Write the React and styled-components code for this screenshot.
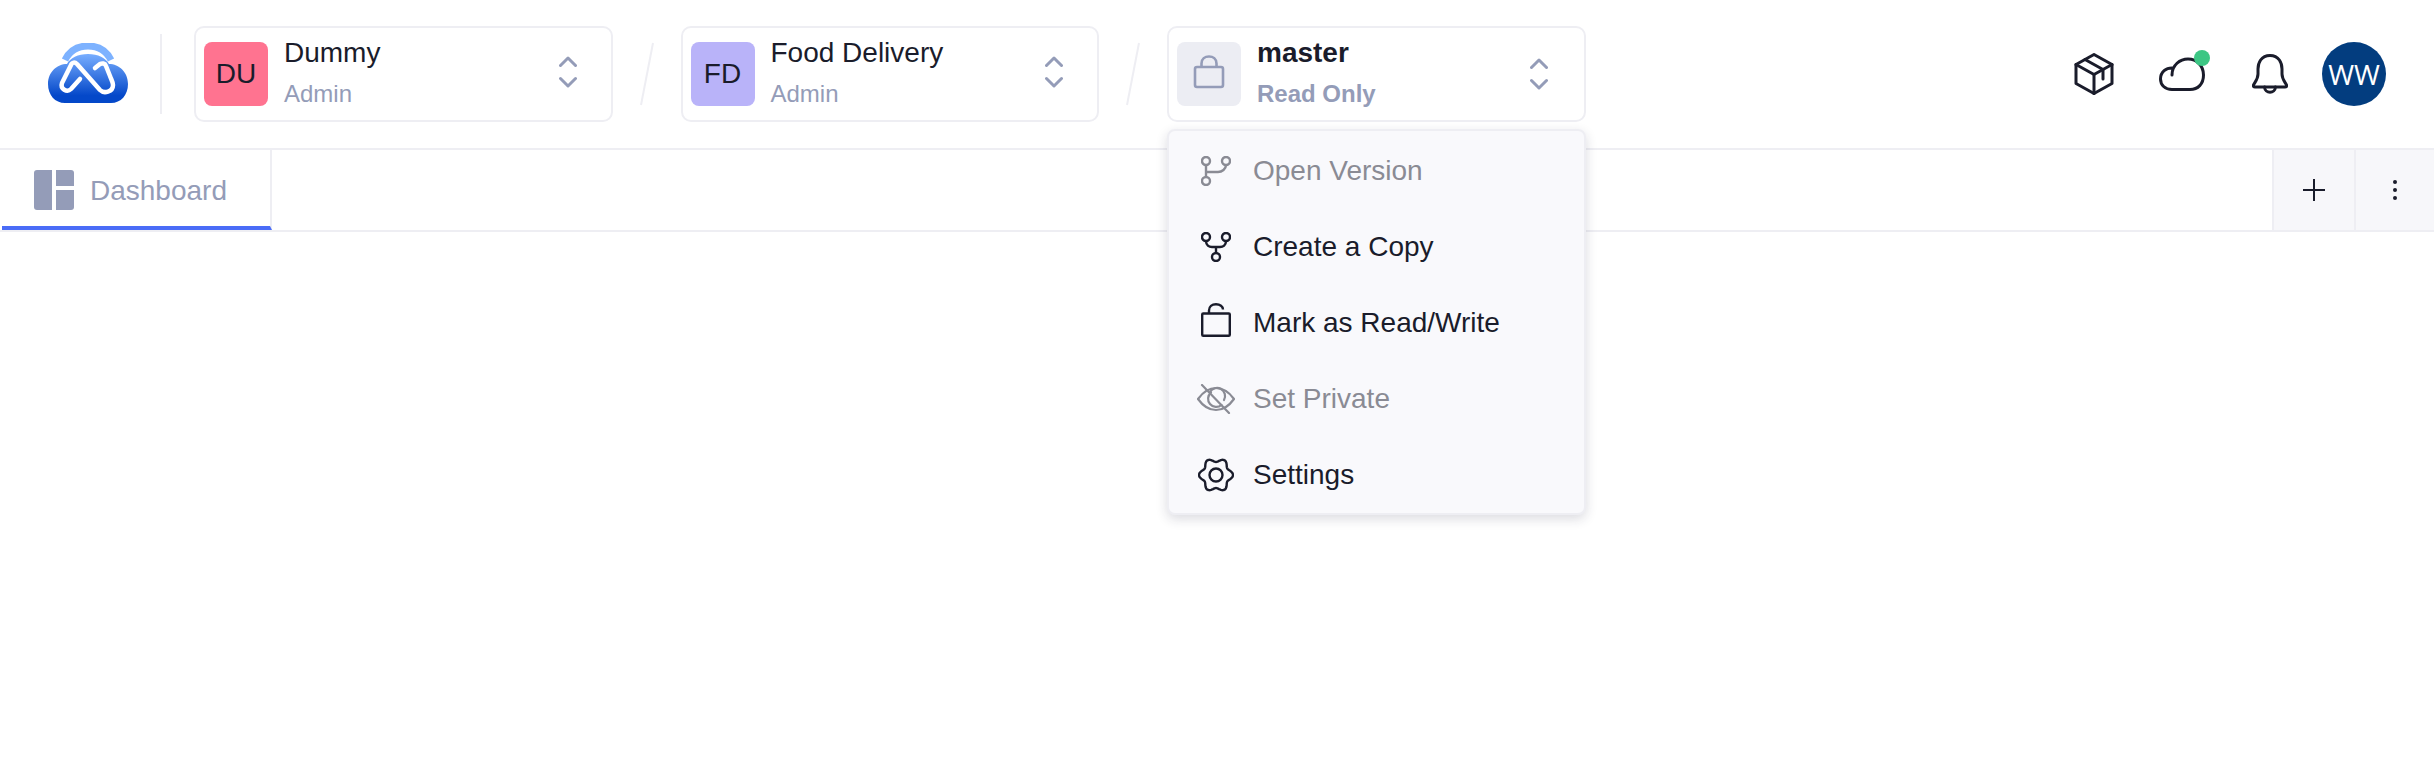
import React from "react";
import styled, { createGlobalStyle } from "styled-components";

const GlobalStyle = createGlobalStyle`
  html, body {
    margin: 0;
    background: #ffffff;
    font-family: "Liberation Sans", Arial, sans-serif;
    color: #1a1c2b;
  }
`;

const Page = styled.div`
  width: 2434px;
  height: 784px;
  overflow: hidden;
`;

const Header = styled.header`
  display: flex;
  align-items: center;
  height: 148px;
  padding: 0 48px;
  border-bottom: 2px solid #eeeef3;
`;

const LogoWrap = styled.div`
  display: flex;
  width: 80px;
  height: 60px;
  margin-bottom: 2px;
`;

const Divider = styled.div`
  width: 2px;
  height: 80px;
  margin: 0 32px;
  background: #eeeef3;
`;

const SwitcherWrap = styled.div`
  position: relative;
`;

const Switcher = styled.div`
  box-sizing: border-box;
  display: flex;
  align-items: center;
  width: 418.5px;
  height: 96px;
  padding: 0 0 0 8px;
  background: #fff;
  border: 2px solid #eeeef3;
  border-radius: 10px;
`;

const Badge = styled.div`
  display: flex;
  align-items: center;
  justify-content: center;
  flex: none;
  width: 64px;
  height: 64px;
  border-radius: 8px;
  background: ${(p) => p.$bg};
  font-size: 28px;
  color: #1a1c2b;
`;

const SwitcherText = styled.div`
  display: flex;
  flex-direction: column;
  flex: 1;
  margin-left: 16px;
  margin-top: -5px;
`;

const SwitcherName = styled.div`
  font-size: 28px;
  line-height: 34px;
  font-weight: ${(p) => (p.$bold ? 700 : 400)};
  color: #1a1c2b;
`;

const SwitcherRole = styled.div`
  margin-top: 10px;
  font-size: 24px;
  line-height: 28px;
  font-weight: ${(p) => (p.$bold ? 700 : 400)};
  color: #949cb8;
`;

const ChevronBox = styled.div`
  display: flex;
  flex: none;
  margin-right: ${(p) => (p.$low ? 36 : 34)}px;
  margin-top: ${(p) => (p.$low ? 0 : -4)}px;
`;

const LockSvg = styled.svg`
  margin-bottom: 4px;
`;

const UnlockSvg = styled.svg`
  margin-bottom: 6px;
`;

const Slash = styled.svg`
  flex: none;
  width: 14px;
  height: 64px;
  margin: 0 27px;
`;

const RightIcons = styled.div`
  display: flex;
  align-items: center;
  margin-left: auto;
`;

const IconSlot = styled.div`
  position: relative;
  display: flex;
  align-items: center;
  justify-content: center;
  width: ${(p) => p.$w}px;
  margin-right: ${(p) => p.$mr}px;
`;

const GreenDot = styled.span`
  position: absolute;
  top: -7px;
  right: -5px;
  width: 16px;
  height: 16px;
  border-radius: 50%;
  background: #3cc684;
`;

const UserAvatar = styled.div`
  display: flex;
  align-items: center;
  justify-content: center;
  width: 64px;
  height: 64px;
  border-radius: 50%;
  background: #033d7f;
  color: #fff;
  font-family: "Open Sans", sans-serif;
  font-size: 28px;
`;

const TabBar = styled.div`
  display: flex;
  height: 80px;
  border-bottom: 2px solid #eeeef3;
`;

const Tab = styled.div`
  box-sizing: border-box;
  display: flex;
  align-items: center;
  gap: 16px;
  width: 270px;
  margin-left: 2px;
  padding: 4px 0 0 32px;
  border-right: 2px solid #eeeef3;
  border-bottom: 4px solid #4a6cf7;
  font-size: 28px;
  color: #949cb8;
`;

const TabLabel = styled.span`
  padding-top: 1px;
`;

const TabActions = styled.div`
  display: flex;
  margin-left: auto;
`;

const TabAction = styled.div`
  box-sizing: border-box;
  display: flex;
  align-items: center;
  justify-content: center;
  width: ${(p) => p.$w}px;
  background: #f7f7fa;
  border-left: 2px solid #eeeef3;
`;

const Menu = styled.div`
  position: absolute;
  top: 103px;
  left: 0;
  box-sizing: border-box;
  width: 418.5px;
  height: 386px;
  padding: 2px 0;
  background: #f9f9fc;
  border: 2px solid #eeeef3;
  border-radius: 8px;
  box-shadow: 0 4px 12px rgba(30, 32, 60, 0.16);
  z-index: 2;
`;

const MenuItem = styled.div`
  display: flex;
  align-items: center;
  height: 76px;
  padding-left: 27px;
  font-size: 28px;
  color: ${(p) => (p.$disabled ? "#8a8b94" : "#1a1c2b")};
`;

const MenuIcon = styled.div`
  display: flex;
  align-items: center;
  justify-content: center;
  flex: none;
  width: 40px;
  margin-right: 17px;
`;

function Chevrons({ low }) {
  return (
    <ChevronBox $low={low}>
      <svg width="18" height="32" viewBox="0 0 18 32" fill="none" stroke="#949cb8" strokeWidth="3" strokeLinecap="round" strokeLinejoin="round">
        <path d="M1.5 9.5 L9 2 L16.5 9.5" />
        <path d="M1.5 22.5 L9 30 L16.5 22.5" />
      </svg>
    </ChevronBox>
  );
}

function Logo() {
  return (
    <svg width="80" height="60" viewBox="0 0 80 60" fill="none">
      <defs>
        <linearGradient id="cloudFill" x1="0" y1="0" x2="0" y2="1">
          <stop offset="0" stopColor="#78aeff" />
          <stop offset="0.85" stopColor="#0448c9" />
        </linearGradient>
      </defs>
      <path
        d="M17 60 C7 60 0 52 0 41 C0 29 9 21 19 21 C22 15 30 11 40 11 C50 11 58 15 61 21 C71 21 80 29 80 41 C80 52 73 60 63 60 Z"
        fill="url(#cloudFill)"
      />
      <path d="M17 17 C22 7 31 3 40 3 C49 3 58 7 63 17" stroke="#7db2ff" strokeWidth="7" />
      <path
        d="M32 36 L23 46 C19 50 12 46 14 40 L23 22 C24 19 27 19 29 21 L52 47 C56 51 65 49 65 42 C65 39 63 36 62 33 L58 23 C57 20 54 20 52 21 L47 25"
        stroke="#ffffff"
        strokeWidth="4.5"
        strokeLinecap="round"
        strokeLinejoin="round"
      />
    </svg>
  );
}

function BoxIcon() {
  return (
    <svg width="40" height="42" viewBox="0 0 40 42" fill="none" stroke="#1a1c2b" strokeWidth="3" strokeLinejoin="round" strokeLinecap="round">
      <path d="M20 1.5 L38 11.5 V30.5 L20 40.5 L2 30.5 V11.5 Z" />
      <path d="M2 11.5 L20 21.5 L38 11.5" />
      <path d="M20 21.5 V40.5" />
      <path d="M11 6.5 L29 16.5 V26" />
    </svg>
  );
}

function CloudIcon() {
  return (
    <svg width="46" height="34" viewBox="0 0 46 34" fill="none" stroke="#1a1c2b" strokeWidth="3" strokeLinecap="round" strokeLinejoin="round">
      <path d="M13 18 C13 8 21 2 29 2 C38 2 44.5 9 44.5 18 C44.5 27 39 32.5 31 32.5 H13 C6 32.5 1.5 28 1.5 22 C1.5 15 7 10.5 14 11" />
    </svg>
  );
}

function BellIcon() {
  return (
    <svg width="36" height="40" viewBox="0 0 36 40" fill="none" stroke="#1a1c2b" strokeWidth="3" strokeLinecap="round" strokeLinejoin="round">
      <path d="M18 1.5 C9 1.5 6 9 6 15 V20 C6 25 3 28 1.5 31 Q1 33 3 33 H33 Q35 33 34.5 31 C33 28 30 25 30 20 V15 C30 9 27 1.5 18 1.5 Z" />
      <path d="M12.5 33 C13 40 23 40 23.5 33" />
    </svg>
  );
}

function LockIcon() {
  return (
    <LockSvg width="32" height="36" viewBox="0 0 32 36" fill="none" stroke="#949cb8" strokeWidth="2.6" strokeLinejoin="round">
      <rect x="2" y="13" width="28" height="20" rx="2" />
      <path d="M8.5 13 V9.5 C8.5 5 12 2.5 16 2.5 C20 2.5 23.5 5 23.5 9.5 V13" />
    </LockSvg>
  );
}

function BranchIcon() {
  return (
    <svg width="30" height="30" viewBox="0 0 30 30" fill="none" stroke="#8a8b94" strokeWidth="2.4">
      <circle cx="5" cy="5" r="4" />
      <circle cx="5" cy="25" r="4" />
      <circle cx="25" cy="5" r="4" />
      <path d="M5 9 V21" />
      <path d="M5 16 H17 C21 16 25 13 25 9" />
    </svg>
  );
}

function ForkIcon() {
  return (
    <svg width="30" height="30" viewBox="0 0 30 30" fill="none" stroke="#1a1c2b" strokeWidth="2.4">
      <circle cx="5" cy="5" r="4" />
      <circle cx="25" cy="5" r="4" />
      <circle cx="15" cy="25" r="4" />
      <path d="M5 9 C5 13 8 15 11 15 H19 C22 15 25 13 25 9" />
      <path d="M15 15 V21" />
    </svg>
  );
}

function UnlockIcon() {
  return (
    <UnlockSvg width="30" height="34" viewBox="0 0 30 34" fill="none" stroke="#1a1c2b" strokeWidth="2.4" strokeLinejoin="round">
      <rect x="1.2" y="10.5" width="27.6" height="22.3" rx="1" />
      <path d="M8 10.5 V7.5 C8 3.5 11 1.2 15 1.2 C19 1.2 22 3.5 22 6.5" />
    </UnlockSvg>
  );
}

function EyeOffIcon() {
  return (
    <svg width="38" height="30" viewBox="0 0 38 30" fill="none" stroke="#8a8b94" strokeWidth="2.2" strokeLinecap="round" strokeLinejoin="round">
      <path d="M1 15 C6 8 12 4 19 4 C26 4 32 8 37 15 C32 22 26 26 19 26 C12 26 6 22 1 15 Z" />
      <path d="M14 8.5 A8 8 0 0 0 24.5 21" />
      <path d="M13 8 A8 8 0 0 1 27 16" />
      <path d="M5 1 L32 29" />
    </svg>
  );
}

// six soft lobes, sampled round the centre
const gearOutline = Array.from({ length: 120 }, (_, i) => {
  const a = (i / 120) * Math.PI * 2;
  const r = 15 + 2 * Math.cos(6 * a);
  return `${(18 + r * Math.cos(a)).toFixed(2)} ${(17 + r * Math.sin(a)).toFixed(2)}`;
}).join(" L ");

function GearIcon() {
  return (
    <svg width="36" height="34" viewBox="0 0 36 34" fill="none" stroke="#1a1c2b" strokeWidth="2.4" strokeLinejoin="round">
      <path d={`M ${gearOutline} Z`} />
      <circle cx="18" cy="17" r="6.5" />
    </svg>
  );
}

function DashboardIcon() {
  return (
    <svg width="40" height="40" viewBox="0 0 40 40" fill="#949cb8">
      <path d="M3 0 H18 V40 H3 Q0 40 0 37 V3 Q0 0 3 0 Z" />
      <path d="M22 0 H37 Q40 0 40 3 V16 H22 Z" />
      <path d="M22 20 H40 V37 Q40 40 37 40 H22 Z" />
    </svg>
  );
}

function PlusIcon() {
  return (
    <svg width="22" height="22" viewBox="0 0 22 22" stroke="#1a1c2b" strokeWidth="2">
      <path d="M11 0 V22 M0 11 H22" />
    </svg>
  );
}

function DotsIcon() {
  return (
    <svg width="6" height="22" viewBox="0 0 6 22" fill="#1a1c2b">
      <circle cx="3" cy="3" r="2" />
      <circle cx="3" cy="11" r="2" />
      <circle cx="3" cy="19" r="2" />
    </svg>
  );
}

function SlashLine() {
  return (
    <Slash viewBox="0 0 14 64" fill="none" stroke="#eeeef3" strokeWidth="2">
      <path d="M13 1 L1 63" />
    </Slash>
  );
}

const menuItems = [
  { label: "Open Version", icon: <BranchIcon />, disabled: true },
  { label: "Create a Copy", icon: <ForkIcon /> },
  { label: "Mark as Read/Write", icon: <UnlockIcon /> },
  { label: "Set Private", icon: <EyeOffIcon />, disabled: true },
  { label: "Settings", icon: <GearIcon /> },
];

export default function App() {
  return (
    <Page>
      <GlobalStyle />
      <Header>
        <LogoWrap>
          <Logo />
        </LogoWrap>
        <Divider />
        <Switcher>
          <Badge $bg="#ff7390">DU</Badge>
          <SwitcherText>
            <SwitcherName>Dummy</SwitcherName>
            <SwitcherRole>Admin</SwitcherRole>
          </SwitcherText>
          <Chevrons />
        </Switcher>
        <SlashLine />
        <Switcher>
          <Badge $bg="#b9b3f9">FD</Badge>
          <SwitcherText>
            <SwitcherName>Food Delivery</SwitcherName>
            <SwitcherRole>Admin</SwitcherRole>
          </SwitcherText>
          <Chevrons />
        </Switcher>
        <SlashLine />
        <SwitcherWrap>
          <Switcher>
            <Badge $bg="#ecedf3">
              <LockIcon />
            </Badge>
            <SwitcherText>
              <SwitcherName $bold>master</SwitcherName>
              <SwitcherRole $bold>Read Only</SwitcherRole>
            </SwitcherText>
            <Chevrons low />
          </Switcher>
          <Menu>
            {menuItems.map((item) => (
              <MenuItem key={item.label} $disabled={item.disabled}>
                <MenuIcon>{item.icon}</MenuIcon>
                {item.label}
              </MenuItem>
            ))}
          </Menu>
        </SwitcherWrap>
        <RightIcons>
          <IconSlot $w={40} $mr={45}>
            <BoxIcon />
          </IconSlot>
          <IconSlot $w={46} $mr={47}>
            <CloudIcon />
            <GreenDot />
          </IconSlot>
          <IconSlot $w={36} $mr={34}>
            <BellIcon />
          </IconSlot>
          <UserAvatar>WW</UserAvatar>
        </RightIcons>
      </Header>
      <TabBar>
        <Tab>
          <DashboardIcon />
          <TabLabel>Dashboard</TabLabel>
        </Tab>
        <TabActions>
          <TabAction $w={82}>
            <PlusIcon />
          </TabAction>
          <TabAction $w={80}>
            <DotsIcon />
          </TabAction>
        </TabActions>
      </TabBar>
    </Page>
  );
}
